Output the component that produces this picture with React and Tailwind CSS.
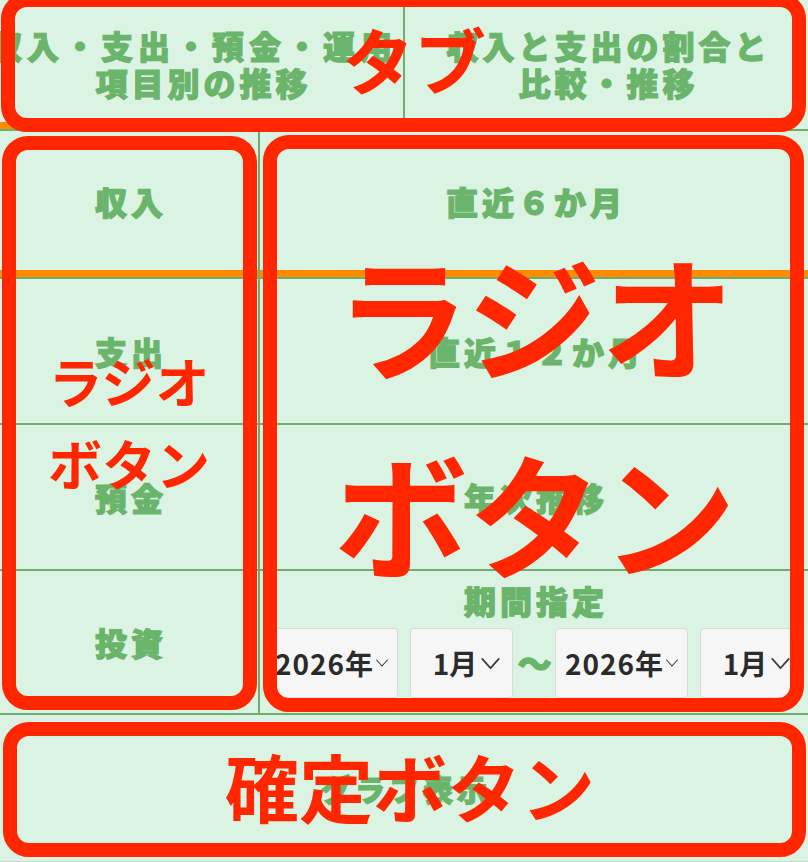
import React from "react";

function Chevron({ w, h }) {
  return (
    <svg width={w} height={h} viewBox="0 0 20 12" fill="none" className="shrink-0">
      <path d="M1 1 L10 11 L19 1" stroke="#3a3a3a" strokeWidth="1.8" strokeLinecap="round" strokeLinejoin="round" />
    </svg>
  );
}

function LeftRow({ label, selected, h }) {
  return (
    <div className={`flex flex-col border-b-2 border-[#70ab70] ${h}`}>
      <div className="flex flex-1 items-center justify-center pl-[4px] text-[32px] font-black leading-[36px] tracking-[4px] text-[#6bb46b] [-webkit-text-stroke:1.2px_#6bb46b]">
        {label}
      </div>
      {selected && <div className="h-[7px] bg-[#ff8c00]" />}
    </div>
  );
}

export default function App() {
  return (
    <div className="relative h-[862px] w-[808px] overflow-hidden bg-[#dbf3e3] font-['Noto_Sans_CJK_JP',sans-serif]">
      {/* Tabs */}
      <div className="flex h-[131px] border-b-2 border-[#70ab70]">
        <div className="flex w-[405px] flex-col border-r-2 border-[#70ab70]">
          <div className="flex flex-1 flex-col items-center justify-center overflow-hidden pt-[6px] text-[32px] font-black leading-[37px] text-[#6bb46b] [-webkit-text-stroke:1.2px_#6bb46b]">
            <div className="mr-[16px] whitespace-nowrap tracking-[5px]">収入・支出・預金・運用</div>
            <div className="whitespace-nowrap pl-[4px] tracking-[4px]">項目別の推移</div>
          </div>
          <div className="h-[7px] bg-[#ff8c00]" />
        </div>
        <div className="flex flex-1 flex-col items-center justify-center overflow-hidden pb-[1px] text-[32px] font-black leading-[37px] text-[#6bb46b] [-webkit-text-stroke:1.2px_#6bb46b]">
          <div className="whitespace-nowrap pl-[4px] tracking-[4px]">収入と支出の割合と</div>
          <div className="whitespace-nowrap pl-[4px] tracking-[4px]">比較・推移</div>
        </div>
      </div>

      {/* Body */}
      <div className="flex h-[584px]">
        <div className="flex w-[260px] flex-col border-r-2 border-[#70ab70]">
          <LeftRow label="収入" selected h="h-[148px]" />
          <LeftRow label="支出" h="h-[146px]" />
          <LeftRow label="預金" h="h-[146px]" />
          <LeftRow label="投資" h="h-[144px]" />
        </div>
        <div className="flex flex-1 flex-col">
          <LeftRow label="直近６か月" selected h="h-[148px]" />
          <LeftRow label="直近１２か月" h="h-[146px]" />
          <LeftRow label="年次推移" h="h-[146px]" />
          <div className="flex h-[144px] flex-col items-center border-b-2 border-[#70ab70] pt-[14px]">
            <div className="h-[30px] pl-[4px] text-[32px] font-black leading-[30px] tracking-[4px] text-[#6bb46b] [-webkit-text-stroke:1.2px_#6bb46b]">
              期間指定
            </div>
            <div className="mt-[13px] flex items-center">
              <div className="flex h-[70px] w-[133px] shrink-0 items-center justify-center gap-[2px] rounded-[4px] border border-[#dadada] bg-[#f6f6f6] text-[28px] font-bold tracking-[1px] text-[#2b2b2b]">
                <span>2026年</span>
                <Chevron w={12} h={8} />
              </div>
              <div className="ml-[12px] flex h-[70px] w-[103px] shrink-0 items-center justify-center gap-[4px] rounded-[4px] border border-[#dadada] bg-[#f6f6f6] pl-[10px] text-[28px] font-bold text-[#2b2b2b]">
                <span>1月</span>
                <Chevron w={19} h={11} />
              </div>
              <div className="ml-[5px] flex w-[33px] shrink-0 justify-center text-[34px] font-black leading-none text-[#6bb46b] [-webkit-text-stroke:1.5px_#6bb46b]">
                〜
              </div>
              <div className="ml-[4px] flex h-[70px] w-[133px] shrink-0 items-center justify-center gap-[2px] rounded-[4px] border border-[#dadada] bg-[#f6f6f6] text-[28px] font-bold tracking-[1px] text-[#2b2b2b]">
                <span>2026年</span>
                <Chevron w={12} h={8} />
              </div>
              <div className="ml-[12px] flex h-[70px] w-[103px] shrink-0 items-center justify-center gap-[4px] rounded-[4px] border border-[#dadada] bg-[#f6f6f6] pl-[10px] text-[28px] font-bold text-[#2b2b2b]">
                <span>1月</span>
                <Chevron w={19} h={11} />
              </div>
            </div>
          </div>
        </div>
      </div>

      {/* Confirm button */}
      <div className="flex h-[147px] items-center justify-center border-b border-[#c9dccd] pl-[4px] text-[30px] font-black tracking-[4px] text-[#6bb46b] [-webkit-text-stroke:1.2px_#6bb46b]">
        グラフ表示
      </div>

      {/* Annotations */}
      <div className="pointer-events-none absolute left-[1px] top-[-7px] h-[139px] w-[805px] rounded-[26px] border-[14px] border-[#ff2600]" />
      <div className="pointer-events-none absolute left-[2px] top-[136px] h-[574px] w-[255px] rounded-[26px] border-[14px] border-[#ff2600]" />
      <div className="pointer-events-none absolute left-[263px] top-[135px] h-[577px] w-[541px] rounded-[26px] border-[14px] border-[#ff2600]" />
      <div className="pointer-events-none absolute left-[3px] top-[722px] h-[135px] w-[803px] rounded-[26px] border-[14px] border-[#ff2600]" />

      <div className="pointer-events-none absolute left-[314px] top-[18px] flex h-[80px] w-[200px] items-center justify-center text-[72px] font-bold leading-none text-[#ff2600]">
        タブ
      </div>
      <div className="pointer-events-none absolute left-[19px] top-[340px] flex w-[220px] flex-col items-center text-[54px] font-bold leading-[82px] text-[#ff2600]">
        <span>ラジオ</span>
        <span>ボタン</span>
      </div>
      <div className="pointer-events-none absolute left-[300px] top-[240px] flex w-[470px] flex-col items-center text-[134px] font-bold text-[#ff2600]">
        <span className="leading-[146px]">ラジオ</span>
        <span className="mt-[52px] leading-[146px]">ボタン</span>
      </div>
      <div className="pointer-events-none absolute left-[160px] top-[745px] flex h-[80px] w-[500px] items-center justify-center text-[74px] font-bold leading-none text-[#ff2600]">
        確定ボタン
      </div>
    </div>
  );
}
